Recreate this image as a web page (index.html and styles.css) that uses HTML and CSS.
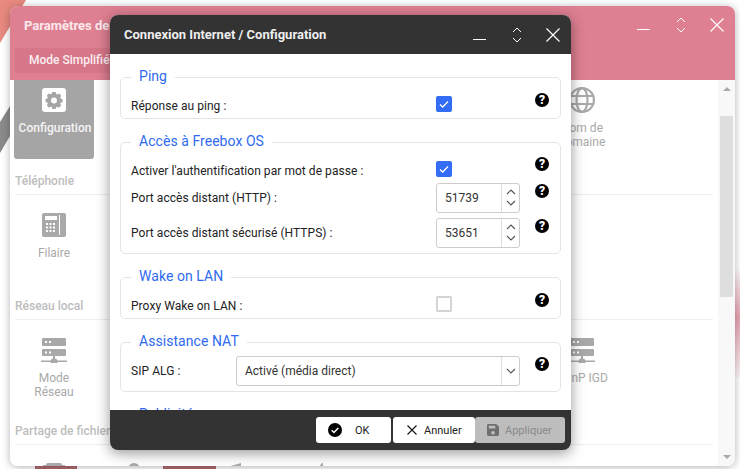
FILE: index.html
```html
<!DOCTYPE html>
<html lang="fr">
<head>
<meta charset="utf-8">
<title>Connexion Internet / Configuration</title>
<link rel="stylesheet" href="styles.css">
</head>
<body>
<div class="wall">
  <svg class="wall-art" width="740" height="469" viewBox="0 0 740 469">
    <defs>
      <linearGradient id="fade" x1="0" y1="0" x2="0" y2="1">
        <stop offset="0" stop-color="#e8a3b0" stop-opacity="0"/>
        <stop offset=".45" stop-color="#e8a3b0"/>
        <stop offset="1" stop-color="#e8a3b0" stop-opacity=".08"/>
      </linearGradient>
    </defs>
    <polygon points="0,0 26,0 0,43" fill="#e8897f"/>
    <polygon points="0,122 10,106 10,136 0,153" fill="#8a8a8a"/>
    <rect x="735" y="267" width="5" height="111" fill="url(#fade)"/>
    <rect x="35" y="465" width="42" height="4" fill="#b06a70"/>
    <rect x="163" y="465" width="53" height="4" fill="#b06a70"/>
  </svg>

  <section class="win back">
    <header class="back-head">
      <div class="back-title">
        <span class="back-name">Paramètres de</span>
        <div class="ctl">
          <svg class="i-min" width="14" height="14" viewBox="0 0 14 14"><path d="M0 11.500H13" stroke="#fff" stroke-width="1.200"/></svg>
          <svg class="i-ud" width="10" height="16" viewBox="0 0 10 16"><path d="M1 5 5 1l4 4M1 11l4 4 4-4" fill="none" stroke="#fff" stroke-width="1"/></svg>
          <svg class="i-x" width="14" height="14" viewBox="0 0 14 14"><path d="M.5.5l13 13M13.500.5l-13 13" stroke="#fff" stroke-width="1.200"/></svg>
        </div>
      </div>
      <div class="mode">Mode Simplifié</div>
    </header>
    <div class="back-body">
      <div class="back-scroll">
        <div class="grid g-first">
          <div class="tile on">
            <svg width="24" height="26" viewBox="0 -1 24 26"><rect width="24" height="24" rx="3" fill="#fff"/><path fill="#a5a5a5" fill-rule="evenodd" d="M10 4h4l.5 2.300 1.300.6 2-1.200 2.700 2.800-1.200 2 .5 1.300 2.200.5v3.800l-2.200.5-.5 1.300 1.200 2-2.700 2.700-2-1.200-1.300.5L14 24h-4l-.5-2.300-1.300-.5-2 1.200-2.700-2.700 1.200-2-.5-1.300L2 15.900v-3.800l2.200-.5.500-1.300-1.200-2 2.700-2.800 2 1.200 1.300-.6zM12 10.500a3.500 3.500 0 1 0 0 7 3.500 3.500 0 0 0 0-7z" transform="translate(1.800 .6) scale(.85)"/></svg>
            <span>Configuration</span>
          </div>
          <div class="tile"></div><div class="tile"></div><div class="tile"></div><div class="tile"></div><div class="tile"></div>
          <div class="tile">
            <svg width="26" height="26" viewBox="0 0 26 26" fill="none" stroke="#a9a9a9" stroke-width="2.200"><circle cx="13" cy="13" r="11.900"/><ellipse cx="13" cy="13" rx="5.500" ry="11.900"/><path d="M2 9h22M2 17h22"/></svg>
            <span>Nom de<br>domaine</span>
          </div>
        </div>
        <h3 class="sec">Téléphonie</h3>
        <div class="grid">
          <div class="tile">
            <svg width="24" height="26" viewBox="0 -1 24 26"><path fill="#a9a9a9" fill-rule="evenodd" d="M2 0h20a2 2 0 0 1 2 2v20a2 2 0 0 1-2 2H2a2 2 0 0 1-2-2V2a2 2 0 0 1 2-2zM3 3v4h12V3zM17 2v20h1V2zM4 10v2h2v-2zM7.500 10v2h2v-2zM11 10v2h2v-2zM4 13.500v2h2v-2zM7.500 13.500v2h2v-2zM11 13.500v2h2v-2zM4 17v2h2v-2zM7.500 17v2h2v-2zM11 17v2h2v-2z"/></svg>
            <span>Filaire</span>
          </div>
        </div>
        <h3 class="sec">Réseau local</h3>
        <div class="grid">
          <div class="tile">
            <svg width="26" height="26" viewBox="0 0 26 26"><path fill="#a9a9a9" fill-rule="evenodd" d="M2 1h22a1 1 0 0 1 1 1v6a1 1 0 0 1-1 1H2a1 1 0 0 1-1-1V2a1 1 0 0 1 1-1zM4 4v2h2V4zM8 4v2h2V4zM2 12h22a1 1 0 0 1 1 1v5a1 1 0 0 1-1 1H2a1 1 0 0 1-1-1v-5a1 1 0 0 1 1-1zM4 14.500v2h2v-2zM8 14.500v2h2v-2zM12 19h2v2.500a3 3 0 0 1 2.500 2H26V25H16.500a3.500 3.500 0 0 1-7 0H0v-1.500h9.500a3 3 0 0 1 2.500-2z"/></svg>
            <span>Mode<br>Réseau</span>
          </div>
          <div class="tile"></div><div class="tile"></div><div class="tile"></div><div class="tile"></div><div class="tile"></div>
          <div class="tile">
            <svg width="26" height="26" viewBox="0 0 26 26"><path fill="#a9a9a9" fill-rule="evenodd" d="M2 1h22a1 1 0 0 1 1 1v6a1 1 0 0 1-1 1H2a1 1 0 0 1-1-1V2a1 1 0 0 1 1-1zM4 4v2h2V4zM8 4v2h2V4zM2 12h22a1 1 0 0 1 1 1v5a1 1 0 0 1-1 1H2a1 1 0 0 1-1-1v-5a1 1 0 0 1 1-1zM4 14.500v2h2v-2zM8 14.500v2h2v-2zM12 19h2v2.500a3 3 0 0 1 2.500 2H26V25H16.500a3.500 3.500 0 0 1-7 0H0v-1.500h9.500a3 3 0 0 1 2.500-2z"/></svg>
            <span>UPnP IGD</span>
          </div>
        </div>
        <h3 class="sec">Partage de fichiers</h3>
        <div class="grid">
          <div class="tile"><svg width="26" height="26" viewBox="0 0 26 26"><path fill="#a9a9a9" d="M2 3h3a2 2 0 0 1 2-2h12a2 2 0 0 1 2 2h3v20H2z"/></svg></div>
          <div class="tile"><svg width="26" height="26" viewBox="0 0 26 26"><circle cx="5" cy="7" r="6" fill="#a9a9a9"/></svg></div>
          <div class="tile"><svg width="26" height="26" viewBox="0 0 26 26"><path fill="#a9a9a9" d="M10 5 24 1v8H10z"/></svg></div>
          <div class="tile"><svg width="26" height="26" viewBox="0 0 26 26"><path fill="#a9a9a9" d="M13 6 17 1h1v8h-5z"/></svg></div>
        </div>
      </div>
      <div class="scrollbar">
        <i class="arr up"></i>
        <div class="track"><b class="thumb"></b></div>
        <i class="arr down"></i>
      </div>
    </div>
  </section>

  <section class="win modal">
    <header class="modal-head">
      <span class="modal-title">Connexion Internet / Configuration</span>
      <div class="ctl">
        <svg class="i-min" width="14" height="14" viewBox="0 0 14 14"><path d="M0 11.500H13" stroke="#fff" stroke-width="1.200"/></svg>
        <svg class="i-ud" width="10" height="16" viewBox="0 0 10 16"><path d="M1 5 5 1l4 4M1 11l4 4 4-4" fill="none" stroke="#fff" stroke-width="1"/></svg>
        <svg class="i-x" width="14" height="14" viewBox="0 0 14 14"><path d="M.5.5l13 13M13.500.5l-13 13" stroke="#fff" stroke-width="1.200"/></svg>
      </div>
    </header>
    <div class="modal-body">
      <fieldset class="fs">
        <legend>Ping</legend>
        <div class="row r-check">
          <span class="lbl">Réponse au ping :</span>
          <span class="cb on"><svg width="16" height="16" viewBox="0 0 16 16"><path d="M4 8.500l2.700 2.500L12 5.500" fill="none" stroke="#fff" stroke-width="1.300"/></svg></span>
          <span class="help">?</span>
        </div>
      </fieldset>
      <fieldset class="fs fs-os">
        <legend>Accès à Freebox OS</legend>
        <div class="row r-check">
          <span class="lbl">Activer l'authentification par mot de passe :</span>
          <span class="cb on"><svg width="16" height="16" viewBox="0 0 16 16"><path d="M4 8.500l2.700 2.500L12 5.500" fill="none" stroke="#fff" stroke-width="1.300"/></svg></span>
          <span class="help">?</span>
        </div>
        <div class="row r-num">
          <span class="lbl">Port accès distant (HTTP) :</span>
          <div class="num"><span>51739</span><div class="spin"><svg width="10" height="26" viewBox="0 0 10 26"><path d="M1 9 5 5l4 4M1 16l4 4 4-4" fill="none" stroke="#555" stroke-width="1.100"/></svg></div></div>
          <span class="help">?</span>
        </div>
        <div class="row r-num">
          <span class="lbl">Port accès distant sécurisé (HTTPS) :</span>
          <div class="num"><span>53651</span><div class="spin"><svg width="10" height="26" viewBox="0 0 10 26"><path d="M1 9 5 5l4 4M1 16l4 4 4-4" fill="none" stroke="#555" stroke-width="1.100"/></svg></div></div>
          <span class="help">?</span>
        </div>
      </fieldset>
      <fieldset class="fs">
        <legend>Wake on LAN</legend>
        <div class="row r-check">
          <span class="lbl">Proxy Wake on LAN :</span>
          <span class="cb"></span>
          <span class="help">?</span>
        </div>
      </fieldset>
      <fieldset class="fs">
        <legend>Assistance NAT</legend>
        <div class="row r-sel">
          <span class="lbl lbl-sip">SIP ALG :</span>
          <div class="sel"><span>Activé (média direct)</span><div class="spin"><svg width="10" height="6" viewBox="0 0 10 6"><path d="M1 1l4 4 4-4" fill="none" stroke="#555" stroke-width="1.100"/></svg></div></div>
          <span class="help">?</span>
        </div>
      </fieldset>
      <fieldset class="fs fs-pub">
        <legend>Publicité</legend>
      </fieldset>
    </div>
    <footer class="modal-foot">
      <button class="btn b-ok" type="button"><svg width="14" height="14" viewBox="0 0 16 16"><circle cx="8" cy="8" r="8" fill="#000"/><path d="M4.200 8.300l2.600 2.500 5-5.200" fill="none" stroke="#fff" stroke-width="1.700"/></svg><span>OK</span></button>
      <button class="btn b-no" type="button"><svg width="10" height="10" viewBox="0 0 10 10"><path d="M.5.500l9 9M9.500.5l-9 9" stroke="#111" stroke-width="1.100"/></svg><span>Annuler</span></button>
      <button class="btn b-apply" type="button" disabled><svg width="12" height="12" viewBox="0 0 13 13"><path fill="#6f6f6f" fill-rule="evenodd" d="M1.500 0H10l3 3v8.500a1.500 1.500 0 0 1-1.500 1.500h-10A1.500 1.500 0 0 1 0 11.500v-10A1.500 1.500 0 0 1 1.500 0zM2 2v3h7V2zM6.500 7.500a2 2 0 1 0 0 4 2 2 0 0 0 0-4z"/></svg><span>Appliquer</span></button>
    </footer>
  </section>
</div>
</body>
</html>
```

FILE: styles.css
```css
* { box-sizing: border-box; }
html, body { margin: 0; padding: 0; height: 100%; }
body { font-family: Roboto, "Liberation Sans", sans-serif; font-size: 12px; color: #222; background: #fff; overflow: hidden; }
.wall { position: relative; width: 740px; height: 469px; overflow: hidden; background: #fff; }
.wall-art { position: absolute; left: 0; top: 0; }
.win { position: absolute; display: flex; flex-direction: column; overflow: hidden; border-radius: 8px; }

.back { left: 10px; top: 6px; width: 725px; height: 460px; background: #fff; box-shadow: 0 1px 8px rgba(0,0,0,.3); }
.back-head { height: 74px; flex: none; background: #de7f92; padding-left: 5px; display: flex; flex-direction: column; }
.back-title { display: flex; align-items: center; height: 38px; padding-left: 9px; }
.back-name { color: #fbe9ec; font-weight: 700; font-size: 13px; flex: 1; }
.mode { width: 110px; height: 25px; margin-top: 4px; background: #d77689; color: #fbeef0; font-weight: 500; font-size: 12px; line-height: 24px; padding-left: 14px; white-space: nowrap; border-radius: 3px; }
.ctl { display: flex; align-items: center; margin-right: 11px; }
.i-min { margin-right: 25px; }
.i-ud { margin-right: 24px; }

.back-body { flex: 1; display: flex; min-height: 0; }
.back-scroll { flex: 1; min-width: 0; padding: 0 5px 0 4px; background: #fff; overflow: hidden; }
.grid { display: grid; grid-template-columns: repeat(7, 80px); gap: 0 8px; padding-top: 10px; height: 89px; }
.g-first { height: 79px; padding-top: 0; }
.tile { width: 80px; height: 79px; display: flex; flex-direction: column; align-items: center; padding-top: 7px; color: #a9a9a9; font-size: 12px; line-height: 14px; text-align: center; }
.tile span { margin-top: 8px; }
.tile.on { background: #a5a5a5; color: #f4f4f4; border-radius: 0 0 3px 3px; font-weight: 500; }
.tile.on span { margin-left: 2px; }
.sec { margin: 0 0 0 1px; height: 36px; padding-top: 15px; border-bottom: 1px solid #eee; font-size: 12px; line-height: 14px; font-weight: 500; color: #bdbdbd; }

.scrollbar { width: 17px; flex: none; background: #f8f8f8; display: flex; flex-direction: column; align-items: center; }
.track { flex: 1; width: 13px; padding-top: 25px; }
.thumb { display: block; width: 13px; height: 181px; background: #dedede; }
.arr { width: 0; height: 0; border-left: 4px solid transparent; border-right: 4px solid transparent; flex: none; }
.arr.up { border-bottom: 4px solid #a9a9a9; margin-top: 7px; }
.arr.down { border-top: 4px solid #a9a9a9; margin-bottom: 7px; }

.modal { left: 110px; top: 15px; width: 461px; height: 435px; background: #fff; box-shadow: 0 3px 14px rgba(0,0,0,.42); }
.modal-head { height: 39px; flex: none; background: #333; display: flex; align-items: center; padding-left: 14px; }
.modal-title { flex: 1; color: #eee; font-weight: 700; font-size: 13px; }
.modal-body { flex: 1; min-height: 0; overflow: hidden; padding: 15px 10px 0; display: flex; flex-direction: column; gap: 15px; }
.modal-foot { height: 40px; flex: none; background: #333; display: flex; justify-content: flex-end; align-items: flex-start; padding: 7px 6px 0 0; }

.fs { margin: 0; padding: 0 10px; border: 1px solid #e4e4e4; border-radius: 5px; min-width: 0; flex: none; }
.fs-pub { height: 60px; }
.fs legend { padding: 0 8px 2px; color: #2f6af0; font-size: 14px; font-weight: 400; line-height: 14px; letter-spacing: .05px; }
.row { display: flex; align-items: flex-start; position: relative; }
.lbl { width: 305px; flex: none; font-size: 12px; letter-spacing: .05px; color: #222; line-height: 30px; }
.r-check { height: 33px; padding-top: 5px; }
.r-check .lbl { line-height: 32px; }
.r-num { height: 35px; }
.r-sel { height: 41px; padding-top: 6px; }
.lbl-sip { width: 105px; }
.cb { width: 16px; height: 16px; border: 2px solid #d4d4d4; border-radius: 2px; display: block; margin-top: 6px; }
.cb.on { background: #336cf5; border: 0; }
.help { width: 14px; height: 14px; border-radius: 50%; background: #000; color: #fff; font-weight: 900; font-size: 12px; line-height: 14px; text-align: center; position: absolute; left: 404px; top: 8px; }
.fs-os .r-check .help { top: 7px; }
.r-num .help { top: 1px; }
.r-sel .help { top: 7px; }
.num { width: 84px; height: 30px; border: 1px solid #ccc; border-radius: 3px; display: flex; align-items: center; font-size: 12px; color: #333; }
.num > span { flex: 1; padding-left: 8px; }
.spin { width: 18px; height: 100%; border-left: 1px solid #ddd; display: flex; align-items: center; justify-content: center; flex: none; }
.sel { width: 284px; height: 30px; border: 1px solid #ccc; border-radius: 3px; display: flex; align-items: center; font-size: 12px; color: #333; }
.sel > span { flex: 1; padding-left: 8px; }

.btn { height: 26px; border: 0; padding: 0; border-radius: 3px; background: #fff; font: 400 11px Roboto, "Liberation Sans", sans-serif; color: #222; display: flex; align-items: center; }
.b-ok { width: 75px; padding-left: 12px; gap: 13px; }
.b-no { width: 82px; padding-left: 14px; gap: 7px; margin-left: 2px; }
.b-apply { width: 90px; padding-left: 12px; gap: 6px; background: #bdbdbd; color: #8a8a8a; }
```
